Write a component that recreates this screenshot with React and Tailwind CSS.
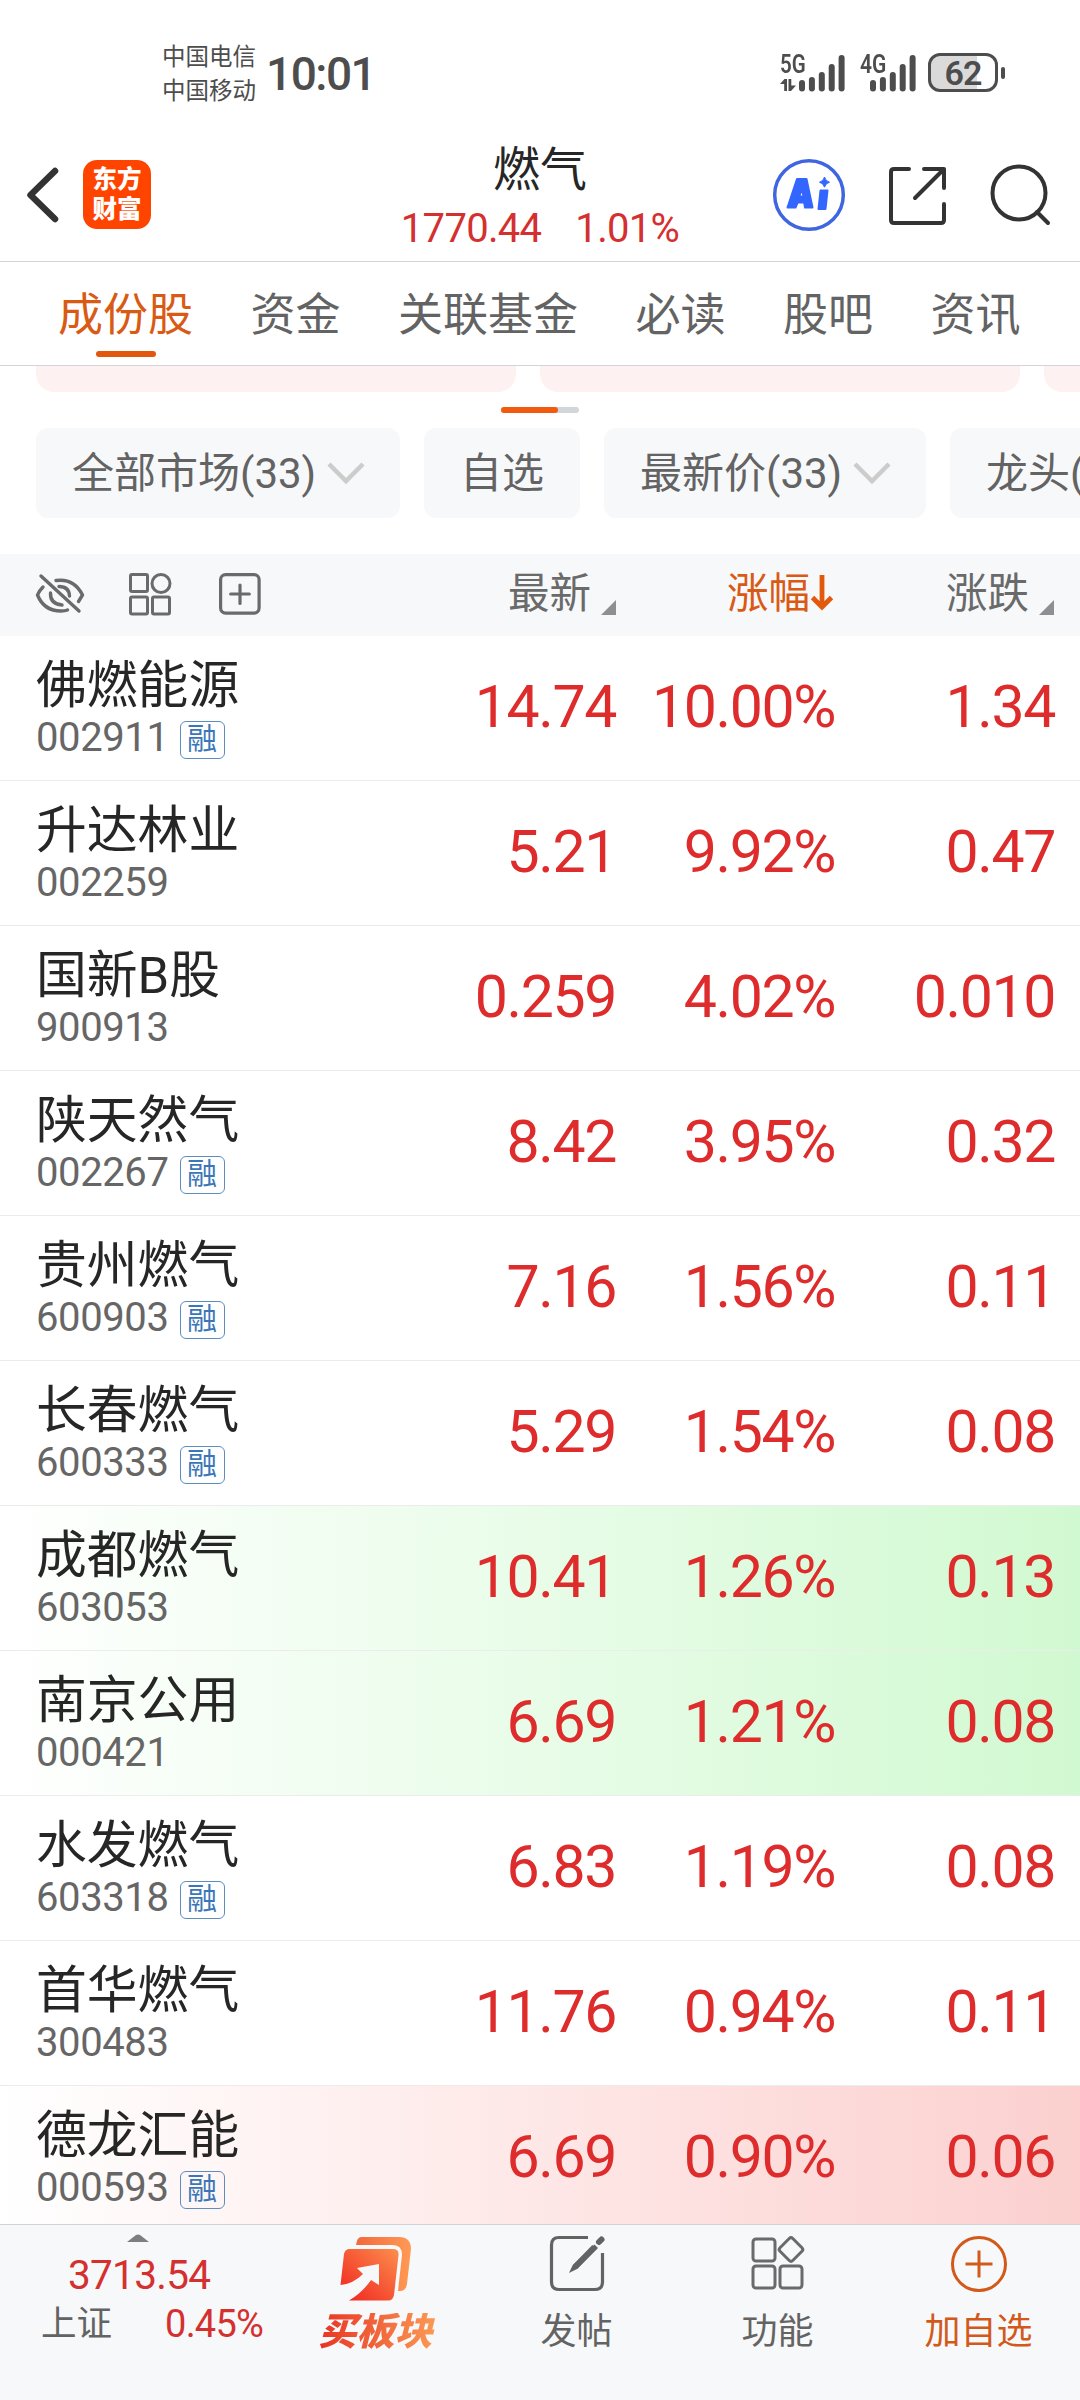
const stocks = [
  { name: "佛燃能源", code: "002911", margin: true, price: "14.74", percent: "10.00%", change: "1.34" },
  { name: "升达林业", code: "002259", price: "5.21", percent: "9.92%", change: "0.47" },
  { name: "国新B股", code: "900913", price: "0.259", percent: "4.02%", change: "0.010" },
  { name: "陕天然气", code: "002267", margin: true, price: "8.42", percent: "3.95%", change: "0.32" },
  { name: "贵州燃气", code: "600903", margin: true, price: "7.16", percent: "1.56%", change: "0.11" },
  { name: "长春燃气", code: "600333", margin: true, price: "5.29", percent: "1.54%", change: "0.08" },
  { name: "成都燃气", code: "603053", price: "10.41", percent: "1.26%", change: "0.13", flash: "down" },
  { name: "南京公用", code: "000421", price: "6.69", percent: "1.21%", change: "0.08", flash: "down" },
  { name: "水发燃气", code: "603318", margin: true, price: "6.83", percent: "1.19%", change: "0.08" },
  { name: "首华燃气", code: "300483", price: "11.76", percent: "0.94%", change: "0.11" },
  { name: "德龙汇能", code: "000593", margin: true, price: "6.69", percent: "0.90%", change: "0.06", flash: "up" },
];

const tabs = ["成份股", "资金", "关联基金", "必读", "股吧", "资讯"];

const flashClass = {
  up: "bg-linear-to-r from-white to-[#fbd0cf]",
  down: "bg-linear-to-r from-white to-[#d1f9d1]",
};

// bar tops, the baseline is always the same
const bars = [25, 22, 17, 9, 0];

function Signal({ className }) {
  return (
    <svg className={className} width="46" height="37" viewBox="0 0 46 37" fill="#4d4d4d">
      {bars.map((top, i) => (
        <rect key={i} x={i * 9.9} y={top} width="6" height={36.5 - top} rx="3" />
      ))}
    </svg>
  );
}

function StatusBar() {
  return (
    <div className="flex h-[130px] shrink-0 pl-[162px] text-[#4d4d4d]">
      <div className="pt-[40px] text-[23.5px] leading-[34px]">
        <div>中国电信</div>
        <div>中国移动</div>
      </div>
      <div className="ml-[10px] mt-[50px] text-[46px] font-medium leading-[48px] tracking-[-1.5px]">10:01</div>
      <div className="ml-auto mr-[75px] flex items-start pt-[53px]">
        <div className="relative h-[40px] w-[66px]">
          <span className="absolute left-0 top-0 origin-left scale-x-[0.82] text-[25px] font-semibold leading-[23px]">5G</span>
          <svg className="absolute left-0 top-[26px]" width="16" height="12" viewBox="0 0 16 12">
            <path d="M0 5L4.5 0H7V12H4.2V5zM8.500 0H11.300V6.500H16L11 12H8.500z" fill="#4d4d4d" />
          </svg>
          <Signal className="absolute left-[19px] top-[2px]" />
        </div>
        <div className="relative ml-[14px] h-[40px] w-[54px]">
          <span className="absolute left-0 top-0 origin-left scale-x-[0.84] text-[25px] font-semibold leading-[23px]">4G</span>
          <Signal className="absolute left-[10px] top-[2px]" />
        </div>
        <div className="ml-[14px] flex items-center">
          <div className="flex h-[39px] w-[70px] items-center justify-center rounded-[12px] border-[3px] border-[#4d4d4d] bg-linear-to-r from-[#dadada] from-72% to-white to-72% text-[34px] font-semibold leading-[34px] tracking-[-1px]">
            62
          </div>
          <div className="ml-[3px] h-[12px] w-[4px] rounded-full bg-[#4d4d4d]" />
        </div>
      </div>
    </div>
  );
}

function Header() {
  return (
    <div className="relative flex h-[132px] shrink-0 items-center border-b border-[#d3d4d6] pb-[2px]">
      <svg className="ml-[25px]" width="34" height="58" viewBox="0 0 34 58" fill="none">
        <path d="M30 5L5.500 29L30 53" stroke="#333" strokeWidth="6.500" strokeLinecap="round" strokeLinejoin="round" />
      </svg>
      <div className="ml-[24px] h-[69px] w-[68px] rounded-[14px] bg-[#ff4400] pt-[5px] text-center text-[24.5px] font-black leading-[29.500px] text-white">
        <div>东方</div>
        <div>财富</div>
      </div>
      <div className="absolute left-1/2 top-[14px] -translate-x-1/2 text-center">
        <div className="text-[47px] leading-[52px] text-[#262626]">燃气</div>
        <div className="mt-[13px] flex gap-[34px] text-[40px] leading-[40px] tracking-[-0.7px] text-[#d43030]">
          <span>1770.44</span>
          <span>1.01%</span>
        </div>
      </div>
      <svg className="ml-auto" width="74" height="74" viewBox="0 0 74 74">
        <circle cx="37" cy="37" r="34.300" fill="none" stroke="#3f66e0" strokeWidth="3.500" />
        <g fill="#3366ff" stroke="#3366ff" strokeWidth="2" strokeLinejoin="round">
          <path fillRule="evenodd" d="M25 21H34.500L40.500 49.500H33L32.200 44.500H25.600L23.500 49.500H15.500zM30 30.500L27.300 38.500H31.500z" />
          <path d="M48.500 32.500H55.500L53.500 51H46.500z" />
          <path d="M52.500 19Q53.500 23.200 57.500 24.200Q53.500 25.200 52.500 29.200Q51.500 25.200 47.500 24.200Q51.500 23.200 52.500 19z" strokeWidth="1" />
        </g>
      </svg>
      <svg className="ml-[40px]" width="62" height="62" viewBox="0 0 62 62" fill="none" stroke="#333" strokeWidth="4" strokeLinecap="round" strokeLinejoin="round">
        <path d="M23 5H8Q5 5 5 8V56Q5 59 8 59H55Q58 59 58 56V40" />
        <path d="M38 5H58V24M57 6L29 34" />
      </svg>
      <svg className="ml-[38px] mr-[28px]" width="66" height="66" viewBox="0 0 66 66" fill="none" stroke="#333" strokeWidth="4" strokeLinecap="round">
        <circle cx="33" cy="31" r="26.500" />
        <path d="M51 50L62 61" />
      </svg>
    </div>
  );
}

function Tabs() {
  return (
    <div className="flex h-[104px] shrink-0 gap-[57.500px] border-b border-[#d3d4d6] pl-[58px] text-[45px] leading-[107px] text-[#636363]">
      {tabs.map((tab, i) => (
        <div key={tab} className={i === 0 ? "relative h-[103px] shrink-0 text-[#d95a14]" : "h-[103px] shrink-0"}>
          {tab}
          {i === 0 && (
            <div className="absolute bottom-[8px] left-1/2 h-[6px] w-[60px] -translate-x-1/2 rounded-full bg-[#e2570d]" />
          )}
        </div>
      ))}
    </div>
  );
}

function Chip({ children, arrow, className }) {
  return (
    <div className={"flex h-[90px] shrink-0 items-center whitespace-nowrap rounded-[12px] bg-[#f7f8fa] pl-[36px] " + className}>
      {children}
      {arrow && (
        <svg className="ml-[11px]" width="38" height="24" viewBox="0 0 38 24" fill="none">
          <path d="M2 3L19 20L36 3" stroke="#ccc" strokeWidth="4.500" />
        </svg>
      )}
    </div>
  );
}

function Filters() {
  return (
    <div className="h-[188px] shrink-0 overflow-hidden">
      <div className="flex gap-[24px] pl-[36px]">
        <div className="h-[26px] w-[480px] shrink-0 rounded-b-[18px] bg-[#fdf1f1]" />
        <div className="h-[26px] w-[480px] shrink-0 rounded-b-[18px] bg-[#fdf1f1]" />
        <div className="h-[26px] w-[480px] shrink-0 rounded-b-[18px] bg-[#fdf1f1]" />
      </div>
      <div className="mx-auto mt-[15px] h-[6px] w-[78px] rounded-full bg-[#d3d6d9]">
        <div className="h-full w-[57px] rounded-full bg-[#f25b0e]" />
      </div>
      <div className="mt-[15px] flex gap-[24px] pl-[36px] text-[42px] text-[#636363]">
        <Chip className="w-[364px]" arrow>全部市场(33)</Chip>
        <Chip className="w-[156px]">自选</Chip>
        <Chip className="w-[322px]" arrow>最新价(33)</Chip>
        <Chip className="w-[322px]">龙头(</Chip>
      </div>
    </div>
  );
}

function SortMark() {
  return (
    <svg className="mb-[21px] ml-[10px] self-end" width="15" height="15" viewBox="0 0 15 15">
      <path d="M15 0V15H0z" fill="#8e8e93" />
    </svg>
  );
}

function TableHead() {
  return (
    <div className="flex h-[82px] shrink-0 bg-[#f7f8fa] pl-[35px] text-[41.5px] leading-[80px] text-[#6a6a6a]">
      <svg className="mt-[19px]" width="50" height="42" viewBox="0 0 50 42" fill="none" stroke="#6a6a6a" strokeWidth="3.400" strokeLinecap="round" strokeLinejoin="round">
        <path d="M6 3L44 38" />
        <path d="M8 14Q4 18 2.500 22Q9 38 26 38Q30 38 32.500 37" />
        <path d="M21 7.500Q39 5 47.500 22L43.500 28.500" />
        <path d="M15.500 20Q15 31 27 32M24 13.500Q34 13.500 34.500 23" />
      </svg>
      <svg className="ml-[43px] mt-[18px]" width="44" height="44" viewBox="0 0 44 44" fill="none" stroke="#6a6a6a" strokeWidth="3">
        <rect x="2.500" y="2.500" width="17" height="17" rx="1.500" />
        <circle cx="33" cy="11.500" r="9" />
        <rect x="2.500" y="25" width="17" height="17" rx="1.500" />
        <rect x="24.500" y="25" width="17" height="17" rx="1.500" />
      </svg>
      <svg className="ml-[46px] mt-[18px]" width="44" height="44" viewBox="0 0 44 44" fill="none" stroke="#6a6a6a" strokeWidth="3.200" strokeLinecap="round">
        <rect x="2.600" y="2.600" width="38.500" height="38.500" rx="5" />
        <path d="M22 13V31.500M12.700 22H31.300" />
      </svg>
      <div className="ml-auto flex h-full">
        最新
        <SortMark />
      </div>
      <div className="flex h-full w-[218px] justify-end text-[#d95a14]">
        涨幅
        <svg className="mt-[21px]" width="24" height="36" viewBox="0 0 24 36" fill="none" stroke="#e3590c" strokeWidth="4.800">
          <path d="M12 0V32M2.500 22.500L12 32L21.500 22.500" />
        </svg>
      </div>
      <div className="mr-[26px] flex h-full w-[220px] justify-end">
        涨跌
        <SortMark />
      </div>
    </div>
  );
}

function StockRow({ stock }) {
  return (
    <div className={"flex h-[145px] shrink-0 border-b-[1.500px] border-[#ececec] pl-[36px] " + (flashClass[stock.flash] || "")}>
      <div className="flex-1 pt-[24px]">
        <div className="text-[50.8px] leading-[52px] text-[#262626]">{stock.name}</div>
        <div className="mt-[5px] flex">
          <div className="w-[143.500px] text-[40px] leading-[41px] tracking-[-0.4px] text-[#666]">{stock.code}</div>
          {stock.margin && (
            <div className="mt-[4px] flex h-[38px] w-[45px] justify-center rounded-[6px] border-[1.500px] border-[#5c8cc0] text-[30px] leading-[34px] text-[#3b77b8]">
              融
            </div>
          )}
        </div>
      </div>
      <div className="flex pr-[25px] text-right text-[59px] leading-[141px] tracking-[-1.400px] text-[#de2b2b]">
        <div className="w-[220px]">{stock.price}</div>
        <div className="w-[219px]">{stock.percent}</div>
        <div className="w-[220px]">{stock.change}</div>
      </div>
    </div>
  );
}

function NavItem({ icon, label, className }) {
  return (
    <div className={"flex w-[201px] flex-col items-center pt-[9px] " + className}>
      {icon}
      <div className="mt-[20px] text-[36px] leading-[36px]">{label}</div>
    </div>
  );
}

function BottomBar() {
  return (
    <div className="flex h-[176px] shrink-0 border-t border-[#d0d2d6] bg-[#f7f8fa] text-[#636363]">
      <div className="w-[275px]">
        <svg className="ml-[127px] mt-[9px]" width="22" height="8" viewBox="0 0 22 8">
          <path d="M0 8L9 1Q11 0 13 1L22 8z" fill="#7d7d82" />
        </svg>
        <div className="ml-[68px] mt-[13px] text-[40.500px] leading-[40px] tracking-[-0.700px] text-[#d43030]">3713.54</div>
        <div className="ml-[41px] mt-[10px] flex w-[222px] justify-between text-[35.500px] leading-[38px]">
          上证
          <span className="text-[38px] tracking-[-0.8px] text-[#d43030]">0.45%</span>
        </div>
      </div>
      <NavItem
        className="italic"
        icon={
          <svg className="mt-[1px]" width="74" height="67" viewBox="0 0 74 67">
            <defs>
              <linearGradient id="block" x1="0" y1="1" x2="1" y2="0">
                <stop offset="0" stopColor="#f0221e" />
                <stop offset="1" stopColor="#fc8f4d" />
              </linearGradient>
              <linearGradient id="back" x1="0" y1="0" x2="1" y2="0">
                <stop offset="0" stopColor="#f3683c" />
                <stop offset="1" stopColor="#ff9a55" />
              </linearGradient>
            </defs>
            <path d="M17 10L18 6Q19 2 23 2H60Q72 2 72 14L68 49Q67 56 61 56H59L63 20Q63 10 54 10z" fill="url(#back)" />
            <path d="M11 14H54Q60 14 59.500 20L55 60Q54 65.500 49 65.500H10Q23 58 32 45L40 50V29L18 33L24 39Q14 49 1.500 50L5 19Q6 14 11 14z" fill="url(#block)" />
          </svg>
        }
        label={
          <span className="-mt-[9px] block bg-linear-to-r from-[#e82a22] via-[#f0643a] to-[#fb9a55] bg-clip-text px-[4px] text-[38px] font-black leading-[38px] text-transparent">
            买板块
          </span>
        }
      />
      <NavItem
        icon={
          <svg width="58" height="60" viewBox="0 0 58 60" fill="none" stroke="#636363" strokeWidth="3.200">
            <path d="M40 3.500H11Q3.500 3.500 3.500 11V48Q3.500 55.500 11 55.500H47Q54.500 55.500 54.500 48V19" />
            <path d="M46.500 10.500L50 14L29 35L21 39L24.500 31.500z" fill="#636363" stroke="none" />
            <path d="M27 33L46.500 13" strokeWidth="6" />
            <path d="M51 8L53.500 5.500" strokeWidth="6" strokeLinecap="round" />
          </svg>
        }
        label="发帖"
      />
      <NavItem
        icon={
          <svg width="58" height="60" viewBox="0 0 58 60" fill="none" stroke="#6a6a6a" strokeWidth="3">
            <rect x="4" y="5" width="22" height="22" rx="3" />
            <rect x="4" y="32" width="22" height="22" rx="3" />
            <rect x="31" y="32" width="22" height="22" rx="3" />
            <rect x="33" y="6.500" width="18" height="18" rx="2.500" transform="rotate(45 42 15.500)" />
          </svg>
        }
        label="功能"
      />
      <NavItem
        className="text-[#d2591a]"
        icon={
          <svg width="60" height="60" viewBox="0 0 60 60" fill="none" stroke="#d2591a" strokeWidth="3">
            <circle cx="30" cy="30" r="26.500" />
            <path d="M30 16.500V43.500M16.500 30H43.500" />
          </svg>
        }
        label="加自选"
      />
    </div>
  );
}

export default function App() {
  return (
    <div className="flex h-[2400px] w-[1080px] flex-col overflow-hidden bg-white font-['Roboto','Noto_Sans_CJK_SC',sans-serif]">
      <StatusBar />
      <Header />
      <Tabs />
      <Filters />
      <TableHead />
      <div className="flex h-[1588px] shrink-0 flex-col overflow-hidden">
        {stocks.map((stock) => (
          <StockRow key={stock.code} stock={stock} />
        ))}
      </div>
      <BottomBar />
    </div>
  );
}
